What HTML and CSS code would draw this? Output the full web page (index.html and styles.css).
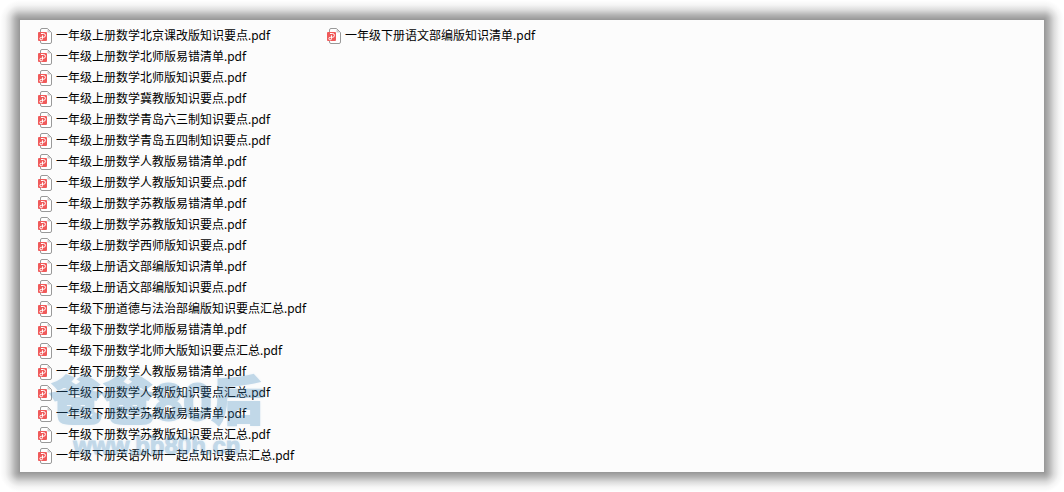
FILE: index.html
```html
<!DOCTYPE html>
<html lang="zh-CN">
<head>
  <meta charset="UTF-8" />
  <meta name="viewport" content="width=device-width, initial-scale=1" />
  <title>一年级知识要点</title>
  <link rel="stylesheet" href="styles.css">
</head>
<body>

  <!-- pdf file icon, shared by every row -->
  <svg class="icon-defs" width="0" height="0" aria-hidden="true">
    <symbol id="pdf" viewBox="0 0 14 16">
      <path d="M4 .5H9.500L13.500 4.500V14A1.500 1.500 0 0 1 12 15.500H4A1.500 1.500 0 0 1 2.500 14V2A1.500 1.500 0 0 1 4 .5Z" fill="#fff" stroke="#999" />
      <path d="M9.500 1V4.500H13Z" fill="#ccc" />
      <rect x="0" y="4" width="9" height="9" rx="1" fill="#f05a5a" />
      <path d="M3 5.500H5.500A1.900 1.900 0 0 1 5.500 9.300H3.200A1.300 1.300 0 1 0 4.500 10.600V7.300" fill="none" stroke="#fff" stroke-width="1" />
    </symbol>
  </svg>

  <div class="frame">
    <div class="shade top-left"></div>
    <div class="shade top"></div>
    <div class="shade top-right"></div>
    <div class="shade left"></div>

    <main class="panel">
      <ul class="files">
        <li class="file"><svg class="icon"><use href="#pdf" /></svg>一年级上册数学北京课改版知识要点.pdf</li>
        <li class="file"><svg class="icon"><use href="#pdf" /></svg>一年级上册数学北师版易错清单.pdf</li>
        <li class="file"><svg class="icon"><use href="#pdf" /></svg>一年级上册数学北师版知识要点.pdf</li>
        <li class="file"><svg class="icon"><use href="#pdf" /></svg>一年级上册数学冀教版知识要点.pdf</li>
        <li class="file"><svg class="icon"><use href="#pdf" /></svg>一年级上册数学青岛六三制知识要点.pdf</li>
        <li class="file"><svg class="icon"><use href="#pdf" /></svg>一年级上册数学青岛五四制知识要点.pdf</li>
        <li class="file"><svg class="icon"><use href="#pdf" /></svg>一年级上册数学人教版易错清单.pdf</li>
        <li class="file"><svg class="icon"><use href="#pdf" /></svg>一年级上册数学人教版知识要点.pdf</li>
        <li class="file"><svg class="icon"><use href="#pdf" /></svg>一年级上册数学苏教版易错清单.pdf</li>
        <li class="file"><svg class="icon"><use href="#pdf" /></svg>一年级上册数学苏教版知识要点.pdf</li>
        <li class="file"><svg class="icon"><use href="#pdf" /></svg>一年级上册数学西师版知识要点.pdf</li>
        <li class="file"><svg class="icon"><use href="#pdf" /></svg>一年级上册语文部编版知识清单.pdf</li>
        <li class="file"><svg class="icon"><use href="#pdf" /></svg>一年级上册语文部编版知识要点.pdf</li>
        <li class="file"><svg class="icon"><use href="#pdf" /></svg>一年级下册道德与法治部编版知识要点汇总.pdf</li>
        <li class="file"><svg class="icon"><use href="#pdf" /></svg>一年级下册数学北师版易错清单.pdf</li>
        <li class="file"><svg class="icon"><use href="#pdf" /></svg>一年级下册数学北师大版知识要点汇总.pdf</li>
        <li class="file"><svg class="icon"><use href="#pdf" /></svg>一年级下册数学人教版易错清单.pdf</li>
        <li class="file"><svg class="icon"><use href="#pdf" /></svg>一年级下册数学人教版知识要点汇总.pdf</li>
        <li class="file"><svg class="icon"><use href="#pdf" /></svg>一年级下册数学苏教版易错清单.pdf</li>
        <li class="file"><svg class="icon"><use href="#pdf" /></svg>一年级下册数学苏教版知识要点汇总.pdf</li>
        <li class="file"><svg class="icon"><use href="#pdf" /></svg>一年级下册英语外研一起点知识要点汇总.pdf</li>
      </ul>
      <ul class="files">
        <li class="file"><svg class="icon"><use href="#pdf" /></svg>一年级下册语文部编版知识清单.pdf</li>
      </ul>

      <div class="watermark">
        <div class="watermark-name">爸爸80后</div>
        <div class="watermark-url">www.bb80h.cn</div>
      </div>
    </main>

    <div class="shade right"></div>
    <div class="shade bottom-left"></div>
    <div class="shade bottom"></div>
    <div class="shade bottom-right"></div>
  </div>

</body>
</html>
```
FILE: styles.css
```css
:root {
  --fade: #969696, #b4b4b4 25%, #dcdcdc 50%, #f5f5f5 75%, #fff 100%;
}
body {
  margin: 0;
  background: #fff;
  color: #000;
  font-family: "Noto Sans", "Noto Sans CJK SC", sans-serif;
  font-size: 12px;
}
.icon-defs {
  position: absolute;
}
/* panel in the middle, soft shade on all sides */
.frame {
  display: grid;
  grid-template-columns: 20px 1fr 20px;
  grid-template-rows: 20px auto 20px;
}
.top { background: linear-gradient(to top, var(--fade)); }
.right { background: linear-gradient(to right, var(--fade)); }
.bottom { background: linear-gradient(to bottom, var(--fade)); }
.left { background: linear-gradient(to left, var(--fade)); }
.top-left { background: radial-gradient(circle 20px at bottom right, var(--fade)); }
.top-right { background: radial-gradient(circle 20px at bottom left, var(--fade)); }
.bottom-left { background: radial-gradient(circle 20px at top right, var(--fade)); }
.bottom-right { background: radial-gradient(circle 20px at top left, var(--fade)); }
.panel {
  position: relative;
  display: flex;
  gap: 21px;
  padding: 5px 18px 6px;
  background: #fcfcfc;
}
.files {
  margin: 0;
  padding: 0;
  list-style: none;
}
.file {
  display: flex;
  align-items: center;
  gap: 4px;
  height: 21px;
  line-height: 21px;
  white-space: nowrap;
}
.icon {
  flex: none;
  width: 14px;
  height: 16px;
}
/* site mark laid over the bottom of the list */
.watermark {
  position: absolute;
  left: 30px;
  bottom: 12px;
  color: #3d86bd;
  font-family: "Liberation Sans", "Noto Sans CJK SC", sans-serif;
  font-weight: 900;
  text-align: center;
  opacity: 0.3;
  pointer-events: none;
  text-shadow: 0 0 3px #8fc0e8;
}
.watermark-name {
  font-size: 52px;
  line-height: 60px;
  -webkit-text-stroke: 2px #3d86bd;
}
.watermark-url {
  font-size: 24px;
  line-height: 28px;
  -webkit-text-stroke: 1px #3d86bd;
}
```
